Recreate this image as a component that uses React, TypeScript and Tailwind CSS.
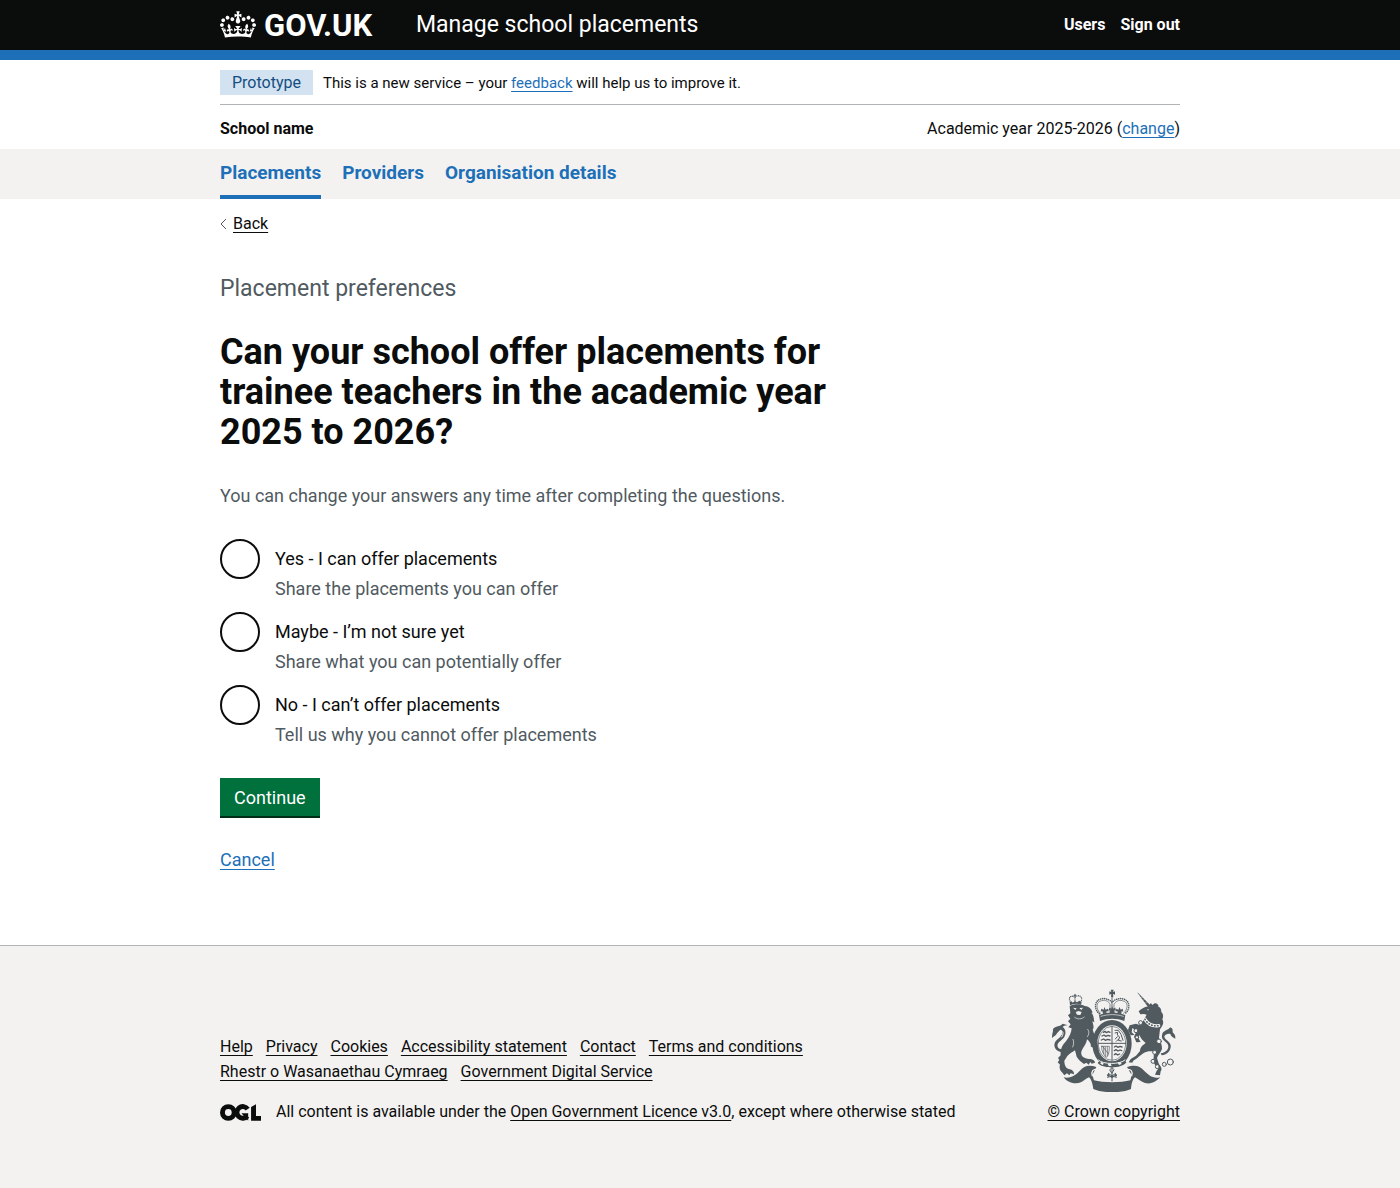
import React from "react";

const LINK =
  "text-[#1d70b8] underline decoration-1 underline-offset-[3px] hover:text-[#003078] hover:decoration-[3px]";
const DARK_LINK = "text-[#0b0c0c] underline decoration-1 underline-offset-[3px] hover:decoration-[3px]";

function Container({ className = "", children }: { className?: string; children: React.ReactNode }) {
  return <div className={`mx-auto w-full max-w-[960px] ${className}`}>{children}</div>;
}

function CrownIcon() {
  return (
    <svg aria-hidden="true" viewBox="0 0 132 97" className="h-[27px] w-9 fill-current">
      <path d="M25 30.2c3.5 1.5 7.7-.2 9.1-3.7 1.5-3.6-.2-7.8-3.9-9.2-3.6-1.4-7.6.3-9.1 3.9-1.4 3.5.3 7.5 3.9 9zM9 39.5c3.6 1.5 7.8-.2 9.2-3.7 1.5-3.6-.2-7.8-3.9-9.1-3.6-1.5-7.6.2-9.1 3.8-1.4 3.5.3 7.5 3.8 9zM4.4 57.2c3.5 1.5 7.7-.2 9.1-3.8 1.5-3.6-.2-7.7-3.9-9.1-3.5-1.5-7.6.3-9.1 3.8-1.4 3.5.3 7.6 3.9 9.1zm38.3-21.4c3.5 1.5 7.7-.2 9.1-3.8 1.5-3.6-.2-7.7-3.9-9.1-3.6-1.5-7.6.3-9.1 3.8-1.3 3.6.4 7.7 3.9 9.1zm64.4-5.6c-3.6 1.5-7.8-.2-9.1-3.7-1.5-3.6.2-7.8 3.8-9.2 3.6-1.4 7.7.3 9.2 3.9 1.3 3.5-.4 7.5-3.9 9zm15.9 9.3c-3.6 1.5-7.7-.2-9.1-3.7-1.5-3.6.2-7.8 3.7-9.1 3.6-1.5 7.7.2 9.2 3.8 1.5 3.5-.3 7.5-3.8 9zm4.7 17.7c-3.6 1.5-7.8-.2-9.2-3.8-1.5-3.6.2-7.7 3.9-9.1 3.6-1.5 7.7.3 9.2 3.8 1.3 3.5-.4 7.6-3.9 9.1zM89.3 35.8c-3.6 1.5-7.8-.2-9.2-3.8-1.4-3.6.2-7.7 3.9-9.1 3.6-1.5 7.7.3 9.2 3.8 1.4 3.6-.3 7.7-3.9 9.1zM69.7 17.7l8.9 4.7V9.3l-8.9 2.8c-.2-.3-.5-.6-.9-.9L72.4 0H59.6l3.5 11.2c-.3.3-.6.5-.9.9l-8.8-2.8v13.1l8.8-4.7c.3.3.6.7.9.9l-5 15.4v.1c-.2.8-.4 1.6-.4 2.4 0 4.1 3.1 7.5 7 8.1h.2c.3 0 .7.1 1 .1.4 0 .7 0 1-.1h.2c4-.6 7.1-4.1 7.1-8.1 0-.8-.1-1.7-.4-2.4V34l-5.1-15.4c.4-.2.7-.6 1-.9zM66 92.8c16.9 0 32.8 1.1 47.1 3.2 4-16.9 8.9-26.7 14-33.5l-9.6-3.4c1 4.9 1.1 7.2 0 10.2-1.5-1.4-3-4.3-4.2-8.7L108.6 76c2.8-2 5-3.2 7.5-3.3-4.4 9.4-10 11.9-13.6 11.2-4.3-.8-6.3-4.6-5.6-7.9 1-4.7 5.7-5.9 8-.5 4.3-8.7-3-11.4-7.6-8.8 7.1-7.2 7.9-13.5 2.1-21.1-8 6.1-8.1 12.3-4.5 20.8-4.7-5.4-12.1-2.5-9.5 6.2 3.4-5.2 7.9-2 7.2 3.1-.6 4.3-6.4 7.8-13.5 7.2-10.3-.9-10.9-8-11.2-13.8 2.5-.5 7.1 1.8 11 7.3L80.2 60c-4.1 4.4-8 5.3-12.3 5.4 1.4-4.4 8-11.6 8-11.6H55.5s6.4 7.2 7.9 11.6c-4.2-.1-8-1-12.3-5.4l1.4 16.4c3.9-5.5 8.5-7.7 10.9-7.3-.3 5.8-.9 12.8-11.1 13.8-7.2.6-12.9-2.9-13.5-7.2-.7-5 3.8-8.3 7.1-3.1 2.7-8.7-4.6-11.6-9.4-6.2 3.7-8.5 3.6-14.7-4.6-20.8-5.8 7.6-5 13.9 2.2 21.1-4.7-2.6-11.9.1-7.7 8.8 2.3-5.5 7.1-4.2 8.1.5.7 3.3-1.3 7.1-5.7 7.9-3.5.7-9-1.8-13.5-11.2 2.5.1 4.7 1.3 7.5 3.3l-4.7-15.4c-1.2 4.4-2.7 7.2-4.3 8.7-1.1-3-.9-5.3 0-10.2l-9.5 3.4c5 6.9 9.9 16.7 14 33.5 14.8-2.1 30.8-3.2 47.7-3.2z" />
    </svg>
  );
}

/* Open Government Licence mark: a ring, an open ring with a bar, and a corner */
function LicenceMark() {
  return (
    <svg aria-hidden="true" viewBox="0 0 483 196" className="h-[17px] w-[41px] shrink-0" fill="none" stroke="#0b0c0c" strokeWidth="58">
      <circle cx="98" cy="98" r="69" />
      <path d="M326 59A69 69 0 1 0 322 141" />
      <path d="M252 106H332V194L312 172L276 132Z" fill="#0b0c0c" stroke="none" />
      <path d="M424 0V140H483V194H366V34Z" fill="#0b0c0c" stroke="none" />
    </svg>
  );
}

function RoyalArms() {
  const ink = "#505a5f";
  const paper = "#f3f2f1";
  return (
    <svg aria-hidden="true" viewBox="36 28 378 309" className="h-[103px] w-[126px]" fill={ink} stroke="none" strokeLinecap="round" strokeLinejoin="round">
      {/* scroll */}
      <path d="M74 293C96 298 112 285 124 272C134 258 152 254 172 262L160 286L165 302C190 310 248 310 274 302L278 286L264 262C286 254 304 258 314 272C328 286 342 299 364 293C352 305 338 315 318 310C306 307 298 298 288 293C282 298 278 308 276 328C250 341 190 341 163 328C160 308 156 298 150 293C138 298 130 310 112 311C96 312 82 304 74 293Z" />
      <path d="M160 288C156 276 162 266 176 270M278 288C282 276 276 266 262 270" fill="none" stroke={paper} strokeWidth="4" />
      {/* garter and shield */}
      <ellipse cx="219" cy="192" rx="59" ry="71" />
      <ellipse cx="219" cy="191" rx="44" ry="54" fill={paper} />
      <ellipse cx="219" cy="191" rx="41" ry="51" fill="none" stroke={ink} strokeWidth="2" />
      <path d="M219 141V241M178 191H260" stroke={ink} strokeWidth="3" />
      <g fill="none" stroke={ink} strokeWidth="4">
        <path d="M193 158L198 155L202 159L208 156L213 158M189 169L195 166L200 170L207 167L213 169M187 181L194 178L199 182L206 179L213 181" />
        <path d="M226 202L231 199L237 203L243 200L249 202M226 213L231 210L237 214L243 211L248 213M226 225L231 222L236 226L242 223" />
        <path d="M228 152H238L246 164L252 182M228 160L236 158L235 166L242 172L238 182L247 184M229 178L235 171M232 185L238 179" strokeWidth="3" />
        <path d="M188 200H211C211 216 209 228 202 233C193 224 187 214 188 200M194 202V222M199 202V229M205 202V229M190 199L208 222" strokeWidth="2" />
      </g>
      <path d="M184 240C194 252 244 252 254 238L262 248C250 268 190 268 176 250Z" />
      <path d="M186 246L194 250L192 256L184 252ZM206 253L214 250L218 258L210 260ZM236 249L244 246L248 253L240 256Z" fill={paper} />
      <path d="M178 241C192 255 244 255 258 241" fill="none" stroke={paper} strokeWidth="3" />
      {/* rose and thistle badge */}
      <path d="M219 268V304M208 281L219 289L230 281M206 293L219 289L232 293M213 270L219 264L225 270L219 280Z" fill="none" stroke={ink} strokeWidth="3" />
      <circle cx="208" cy="287" r="4" />
      <circle cx="230" cy="287" r="4" />
      <circle cx="219" cy="290" r="5" />
      {/* imperial crown */}
      <path d="M216 51L217 43L211 45V35L217 37L215 30H224L222 37L228 35V45L222 43L223 51L219 55Z" />
      <g fill="none" stroke={ink} strokeWidth="5" strokeDasharray="0 6">
        <path d="M181 102C163 88 167 62 186 58C200 54 211 60 219 68C227 60 239 54 253 58C272 62 276 88 258 102" />
        <path d="M219 58V96" />
      </g>
      <path d="M184 101C168 84 172 66 188 63C200 60 209 65 213 74V98M254 101C270 84 267 66 250 63C239 60 230 65 225 74V98" fill="none" stroke={ink} strokeWidth="2" />
      <path d="M180 106C204 96 234 96 259 106L256 124C232 115 208 115 183 124Z" />
      <path d="M186 110C208 103 231 103 253 110" fill="none" stroke={paper} strokeWidth="2" />
      <path d="M192 103L190 94L185 96L187 87L194 90L196 82L200 90L207 87L208 96L203 94L202 101ZM212 100L214 92L208 93L211 84L217 87L219 80L223 87L229 84L231 93L225 92L227 100ZM236 101L235 94L230 96L232 87L238 90L242 82L245 90L251 87L253 96L248 94L247 103Z" />
      {/* lion */}
      <g fill="none" stroke={ink}>
        <path d="M93 64C87 50 99 46 108 53C117 44 132 48 127 64M108 53V66" strokeWidth="4" strokeDasharray="0 5" />
        <path d="M108 44V50M105 47H111" strokeWidth="3" />
      </g>
      <path d="M92 68L98 65L101 69L108 64L114 68L121 63L128 66L126 75C114 71 103 72 93 77Z" />
      <path d="M92 79C106 72 126 73 137 79C152 80 158 89 161 99L157 99C165 107 164 117 166 128L160 125C163 137 166 145 161 150C165 164 172 172 175 185C174 196 182 206 178 218L171 210L163 214C165 206 161 200 155 201C158 194 151 185 144 179C142 194 132 203 127 216C125 230 134 234 146 237C157 238 168 240 168 249L158 252L154 247L149 255L142 249L135 253C127 247 119 241 113 231L108 212C101 217 94 220 85 229L76 243C76 255 80 265 89 268C99 269 106 276 105 284L95 281L91 287L84 281L76 287L69 278C63 273 60 263 63 255L56 248L61 241L57 235L65 227C63 210 70 195 81 185C92 171 97 157 98 146L88 143L95 134L87 125L94 117L87 107L94 101Z" />
      <path d="M102 84L113 86L109 91ZM121 85L132 84L127 91ZM110 97L119 94L128 97L124 106L114 105Z" fill={paper} />
      <path d="M107 113C116 120 128 119 136 112M145 171C151 164 151 155 146 149M101 202C105 193 105 186 102 179" fill="none" stroke={paper} strokeWidth="2" />
      <path d="M69 218C51 215 42 202 48 188C54 176 70 173 70 158C70 150 64 148 61 153L54 161C51 169 42 170 39 176C39 160 43 157 42 148C50 137 63 142 71 132L87 137C82 137 75 138 71 142C82 149 82 165 73 176C65 185 53 189 56 201C60 209 67 209 74 208Z" />
      <path d="M63 158C72 149 76 161 68 172" fill="none" stroke={paper} strokeWidth="3" />
      {/* unicorn */}
      <path d="M294 38L300 42L337 80L329 84Z" />
      <path d="M298 47L305 45M304 54L311 52M311 62L318 59M318 70L325 67" stroke={paper} strokeWidth="1" />
      <path d="M330 80L335 70L341 76C346 68 354 69 359 78L356 79C365 83 367 90 367 97C374 104 373 112 370 119C376 128 371 138 363 149L360 174C363 184 370 195 369 208C365 219 357 226 354 235L360 254C367 262 370 268 365 275L363 287L348 285L353 273L357 269L345 251C341 238 346 226 345 216C333 214 323 215 314 220L299 231C291 240 283 239 280 249L269 248L275 238L291 228L303 214C303 202 313 195 320 190C312 184 305 175 301 166L298 176L305 187L292 188L285 171L293 155L280 145L278 158L287 166L275 167L267 151L272 137L291 132L304 137L314 121L323 105L315 103L304 104L299 95C307 88 317 81 330 80Z" />
      <circle cx="327" cy="90" r="2" fill={paper} />
      <path d="M318 119C329 137 345 140 359 138" fill="none" stroke={paper} strokeWidth="10" />
      <path d="M318 119C329 137 345 140 359 138" fill="none" stroke={ink} strokeWidth="5" strokeDasharray="1 8" />
      <path d="M365 221C382 218 391 207 387 195C382 184 366 183 369 166C372 151 387 153 394 143C399 147 402 146 401 158C406 164 410 166 409 177C401 173 397 171 394 163C388 161 379 163 376 170C376 181 391 183 395 196C397 212 385 226 368 227Z" />
      <g fill={paper} stroke={ink} strokeWidth="3">
        <circle cx="305" cy="129" r="6" />
        <circle cx="291" cy="153" r="6" />
        <circle cx="294" cy="173" r="5" />
        <circle cx="360" cy="185" r="7" />
        <circle cx="347" cy="218" r="6" />
        <circle cx="342" cy="245" r="6" />
        <circle cx="355" cy="261" r="6" />
        <circle cx="376" cy="254" r="6" />
        <circle cx="394" cy="247" r="9" />
      </g>
    </svg>
  );
}

const NAV = ["Placements", "Providers", "Organisation details"];

const OPTIONS = [
  { id: "yes", label: "Yes - I can offer placements", hint: "Share the placements you can offer" },
  { id: "maybe", label: "Maybe - I’m not sure yet", hint: "Share what you can potentially offer" },
  { id: "no", label: "No - I can’t offer placements", hint: "Tell us why you cannot offer placements" },
];

const FOOTER_LINKS = [
  "Help",
  "Privacy",
  "Cookies",
  "Accessibility statement",
  "Contact",
  "Terms and conditions",
  "Rhestr o Wasanaethau Cymraeg",
  "Government Digital Service",
];

export default function App() {
  return (
    <div className="flex min-h-screen flex-col bg-white font-['Roboto',sans-serif] text-[#0b0c0c]">
      <header className="border-b-[10px] border-[#1d70b8] bg-[#0b0c0c] text-white">
        <Container className="flex h-[50px] items-center">
          <a href="#" className="flex w-[196px] items-center gap-2 pb-0.5" aria-label="GOV.UK">
            <CrownIcon />
            <span className="pt-1 text-[31px] leading-[30px] font-bold">GOV.UK</span>
          </a>
          <a href="#" className="text-[23px] leading-[30px]">
            Manage school placements
          </a>
          <nav className="ml-auto flex gap-[15px] text-base font-bold" aria-label="Account">
            <a href="#">Users</a>
            <a href="#">Sign out</a>
          </nav>
        </Container>
      </header>

      <Container>
        <div className="flex items-start gap-2.5 border-b border-[#b1b4b6] pt-2.5 pb-[9px]">
          <strong className="bg-[#d2e2f1] px-3 text-base leading-[25px] font-normal text-[#144e81]">Prototype</strong>
          <p className="pt-[3px] text-[15px] leading-5">
            This is a new service – your{" "}
            <a href="#" className={LINK}>
              feedback
            </a>{" "}
            will help us to improve it.
          </p>
        </div>
        <div className="flex items-center justify-between pt-3.5 pb-2.5 text-base leading-5">
          <strong>School name</strong>
          <span>
            Academic year 2025-2026 (
            <a href="#" className={LINK}>
              change
            </a>
            )
          </span>
        </div>
      </Container>

      <nav className="bg-[#f3f2f1]" aria-label="Primary">
        <Container className="flex gap-[21px]">
          {NAV.map((item, i) => (
            <a
              key={item}
              href="#"
              aria-current={i === 0 ? "page" : undefined}
              className={`border-b-4 pt-[11px] pb-2.5 text-[19px] leading-[25px] font-bold text-[#1d70b8] ${i === 0 ? "border-[#1d70b8]" : "border-transparent"}`}
            >
              {item}
            </a>
          ))}
        </Container>
      </nav>

      <Container className="grow pb-[73px]">
        <a href="#" className="mt-[15px] flex w-fit items-center gap-1.5 text-base leading-5">
          <svg aria-hidden="true" viewBox="0 0 7 12" className="h-3 w-[7px]" fill="none" stroke="#505a5f">
            <path d="M6 1L1 6L6 11" />
          </svg>
          <span className="underline decoration-1 underline-offset-[3px]">Back</span>
        </a>

        <main className="max-w-[640px] pt-10">
          <form onSubmit={(e) => e.preventDefault()}>
            <span className="block text-[23px] leading-[30px] text-[#505a5f]">Placement preferences</span>
            <h1 id="question" className="mt-7 text-4xl leading-10 font-bold">
              Can your school offer placements for trainee teachers in the academic year 2025 to 2026?
            </h1>
            <p className="mt-[31px] text-lg leading-[25px] text-[#505a5f]">
              You can change your answers any time after completing the questions.
            </p>

            <div role="radiogroup" aria-labelledby="question" className="mt-[31px] flex flex-col gap-2.5">
              {OPTIONS.map(({ id, label, hint }) => (
                <div key={id} className="flex gap-[15px]">
                  <input
                    type="radio"
                    name="placements"
                    id={id}
                    aria-describedby={`${id}-hint`}
                    className="size-10 shrink-0 appearance-none rounded-full border-2 border-[#0b0c0c] bg-white checked:shadow-[inset_0_0_0_8px_#fff] checked:bg-[#0b0c0c]"
                  />
                  <div className="pt-[7px] text-lg">
                    <label htmlFor={id} className="block leading-[26px]">
                      {label}
                    </label>
                    <div id={`${id}-hint`} className="pt-1 leading-[26px] text-[#505a5f]">
                      {hint}
                    </div>
                  </div>
                </div>
              ))}
            </div>

            <button
              type="submit"
              className="mt-[30px] block border-b-2 border-[#002d18] bg-[#00703c] px-3.5 pt-2 pb-1.5 text-lg leading-6 text-white hover:bg-[#005a30]"
            >
              Continue
            </button>
            <p className="mt-[29px] text-lg leading-[25px]">
              <a href="#" className={LINK}>
                Cancel
              </a>
            </p>
          </form>
        </main>
      </Container>

      <footer className="border-t border-[#b1b4b6] bg-[#f3f2f1] pt-[43px] pb-[67px] text-base leading-5">
        <Container className="flex items-end justify-between gap-8">
          <div>
            <ul className="flex max-w-[640px] flex-wrap gap-x-[13px] gap-y-[5px]">
              {FOOTER_LINKS.map((item) => (
                <li key={item}>
                  <a href="#" className={DARK_LINK}>
                    {item}
                  </a>
                </li>
              ))}
            </ul>
            <div className="mt-5 flex items-center gap-[15px]">
              <LicenceMark />
              <span>
                All content is available under the{" "}
                <a href="#" className={DARK_LINK}>
                  Open Government Licence v3.0
                </a>
                , except where otherwise stated
              </span>
            </div>
          </div>
          <a href="#" className={`flex flex-col items-center gap-2.5 ${DARK_LINK}`}>
            <RoyalArms />
            <span>© Crown copyright</span>
          </a>
        </Container>
      </footer>
    </div>
  );
}
